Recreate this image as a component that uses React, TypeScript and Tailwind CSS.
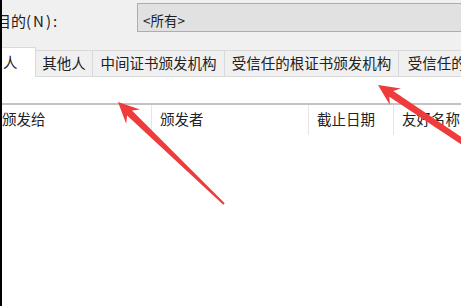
import React from 'react';

type Pt = [number, number];

// builds a tapered "screenshot annotation" arrow polygon from tail to tip
function arrowPoints(tail: Pt, tip: Pt, headLen = 21, headHalf = 10, neckHalf = 3.5, tailHalf = 1) {
  const dx = tip[0] - tail[0];
  const dy = tip[1] - tail[1];
  const len = Math.hypot(dx, dy);
  const ux = dx / len;
  const uy = dy / len;
  const nx = -uy;
  const ny = ux;
  const at = (d: number, w: number): string =>
    `${(tip[0] - ux * d + nx * w).toFixed(1)},${(tip[1] - uy * d + ny * w).toFixed(1)}`;
  return [
    at(0, 0),
    at(headLen, headHalf),
    at(headLen - 5, neckHalf),
    at(len, tailHalf),
    at(len, -tailHalf),
    at(headLen - 5, -neckHalf),
    at(headLen, -headHalf),
  ].join(' ');
}

const tabs = [
  { label: '其他人', width: 'w-[57px]' },
  { label: '中间证书颁发机构', width: 'w-[132px]' },
  { label: '受信任的根证书颁发机构', width: 'w-[174px]' },
  { label: '受信任的发布者', width: 'w-[120px]' },
];

const columns = [
  { label: '颁发给', width: 'w-[150px]', pad: 'pl-0' },
  { label: '颁发者', width: 'w-[157px]', pad: 'pl-[8px]' },
  { label: '截止日期', width: 'w-[85px]', pad: 'pl-[8px]' },
  { label: '友好名称', width: 'w-[120px]', pad: 'pl-[8px]' },
];

export default function App() {
  return (
    <div
      className="relative w-[461px] h-[306px] overflow-hidden bg-white flex text-[#1e1e1e]"
      style={{ fontFamily: '"Noto Sans CJK SC", "Noto Sans", sans-serif' }}
    >
      <div className="w-[2px] shrink-0 bg-black" />
      <div className="flex-1 flex flex-col overflow-hidden">
        <div className="bg-[#f0f0f0] flex flex-col">
          <div className="h-[47px] flex items-start pt-[3px]">
            <div className="w-[135px] shrink-0 h-[29px] flex items-center pt-[6px] overflow-hidden">
              <span className="text-[15px] leading-none ml-[-36px] whitespace-nowrap">
                预期目的<span className="tracking-[2px]">(N):</span>
              </span>
            </div>
            <div className="flex-1 h-[29px] bg-[#e1e1e1] border border-[#adadad] border-r-0 flex items-center pt-[6px] pl-[5px]">
              <span className="text-[13.5px] leading-none">&lt;所有&gt;</span>
            </div>
          </div>
          <div className="h-[30px] flex items-end whitespace-nowrap overflow-hidden">
            <div className="w-[34px] shrink-0 h-[30px] bg-white flex items-center pl-[1px] border-t border-r border-[#d9d9d9]">
              <span className="text-[14.5px] leading-none">人</span>
            </div>
            {tabs.map((t) => (
              <div
                key={t.label}
                className={`${t.width} shrink-0 h-[27px] flex items-center justify-center border-t border-r border-b border-[#d9d9d9] bg-[#f0f0f0]`}
              >
                <span className="text-[14.5px] leading-none text-[#222]">{t.label}</span>
              </div>
            ))}
          </div>
        </div>
        <div className="h-[26px]" />
        <div className="h-[2px] bg-[#c3c3c3]" />
        <div className="flex h-[30px] whitespace-nowrap overflow-hidden">
          {columns.map((c, i) => (
            <div
              key={c.label}
              className={`${c.width} ${c.pad} shrink-0 flex items-center pb-[1px] ${i < columns.length - 1 ? 'border-r border-[#e5e5e5]' : ''}`}
            >
              <span className="text-[14.5px] leading-none text-[#222]">{c.label}</span>
            </div>
          ))}
        </div>
      </div>
      <svg className="absolute inset-0 pointer-events-none" width="461" height="306" viewBox="0 0 461 306">
        <polygon points={arrowPoints([224, 204], [118, 102])} fill="#ef3b3b" />
        <polygon points={arrowPoints([478, 152], [378, 85], 21, 10, 3.5, 3)} fill="#ef3b3b" />
      </svg>
    </div>
  );
}
